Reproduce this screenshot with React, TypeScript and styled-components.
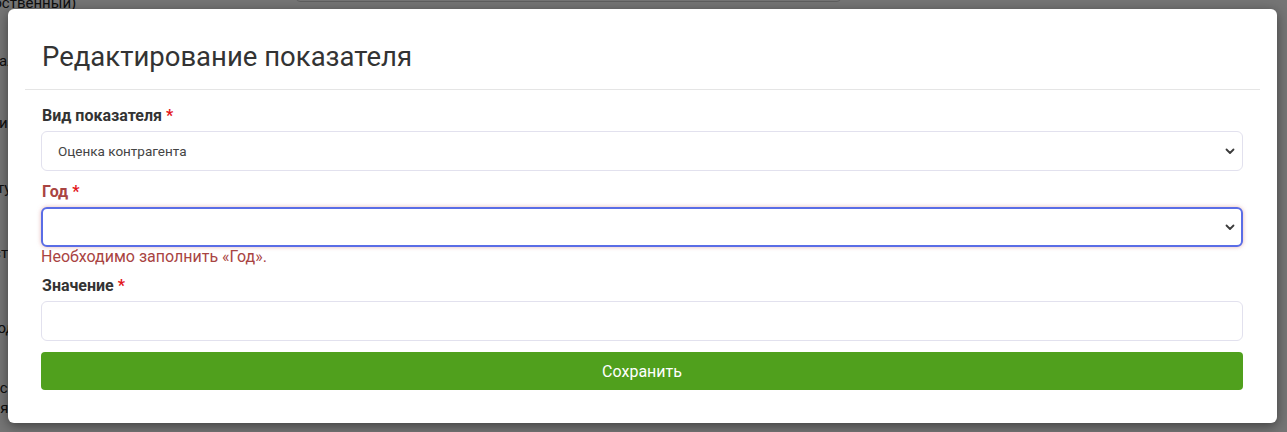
import styled, { createGlobalStyle } from 'styled-components';

const colors = {
  text: '#333333',
  muted: '#444444',
  border: '#e2e1ee',
  divider: '#e5e5e5',
  error: '#a94442',
  required: '#e3161b',
  focus: '#5a6de6',
  success: '#50a01d',
};

const GlobalStyle = createGlobalStyle`
  html, body {
    margin: 0;
    padding: 0;
    height: 100%;
    overflow: hidden;
    background: #ffffff;
    font-family: Roboto, "Liberation Sans", Arial, sans-serif;
  }
  * { box-sizing: border-box; }
`;

const Page = styled.div`
  height: 432px;
  overflow: hidden;
  position: relative;
`;

const BackdropText = styled.div`
  display: flex;
  flex-direction: column;
  font-size: 15px;
  color: #222;
  margin-left: -28px;
`;

const BackLine = styled.div<{ $gap: number }>`
  margin-top: ${(p) => p.$gap}px;
  line-height: 20px;
  white-space: nowrap;
`;

const TopField = styled.div`
  position: absolute;
  left: 296px;
  top: -30px;
  width: 545px;
  height: 32px;
  border: 1px solid #cfcfcf;
  border-radius: 4px;
`;

const Overlay = styled.div`
  position: absolute;
  inset: 0;
  background: rgba(0, 0, 0, 0.54);
  padding: 9px 10px 0 8px;
`;

const Modal = styled.div`
  background: #ffffff;
  border-radius: 6px;
  box-shadow: 0 3px 12px rgba(0, 0, 0, 0.45);
  height: 414px;
`;

const Header = styled.div`
  margin: 0 17px;
  padding: 33px 17px 17px;
  border-bottom: 1px solid ${colors.divider};
`;

const Title = styled.h4`
  margin: 0;
  font-size: 27.5px;
  line-height: 30px;
  font-weight: 400;
  color: ${colors.text};
`;

const Body = styled.div`
  padding: 16px 34px 0 33px;
`;

const Group = styled.div<{ $gap: number }>`
  display: flex;
  flex-direction: column;
  margin-bottom: ${(p) => p.$gap}px;
`;

const Label = styled.label<{ $invalid?: boolean }>`
  font-size: 16px;
  line-height: 20px;
  font-weight: 700;
  padding-left: 1px;
  margin-bottom: 5px;
  color: ${(p) => (p.$invalid ? colors.error : colors.text)};
`;

const Star = styled.span`
  color: ${colors.required};
`;

const SelectWrap = styled.div`
  position: relative;
`;

const Select = styled.select<{ $focused?: boolean }>`
  appearance: none;
  width: 100%;
  height: 40px;
  padding: 0 16px;
  font-family: inherit;
  font-size: 13.5px;
  color: ${colors.muted};
  background: #ffffff;
  border: ${(p) => (p.$focused ? `2px solid ${colors.focus}` : `1px solid ${colors.border}`)};
  border-radius: 6px;
  box-shadow: ${(p) => (p.$focused ? '0 0 4px rgba(205, 120, 120, 0.55)' : 'none')};
  outline: none;
`;

const Chevron = styled.svg`
  position: absolute;
  right: 8px;
  top: 16px;
  width: 10px;
  height: 8px;
  pointer-events: none;
`;

const Input = styled.input`
  width: 100%;
  height: 40px;
  padding: 0 16px;
  font-family: inherit;
  font-size: 13.5px;
  border: 1px solid ${colors.border};
  border-radius: 6px;
  outline: none;
`;

const ErrorText = styled.div`
  font-size: 16px;
  line-height: 20px;
  color: ${colors.error};
`;

const SubmitButton = styled.button`
  width: 100%;
  height: 38px;
  border: none;
  border-radius: 4px;
  background: ${colors.success};
  color: #ffffff;
  font-family: inherit;
  font-size: 16px;
  cursor: pointer;
`;

function ChevronIcon() {
  return (
    <Chevron viewBox="0 0 10 8">
      <path d="M1.5 2.5 L5 6 L8.5 2.5" fill="none" stroke="#3b3b3b" strokeWidth="1.8" strokeLinecap="round" strokeLinejoin="round" />
    </Chevron>
  );
}

export default function App() {
  return (
    <>
      <GlobalStyle />
      <Page>
        <TopField />
        <BackdropText>
          <BackLine $gap={-7}>(собственный)</BackLine>
          <BackLine $gap={38}>Начало</BackLine>
          <BackLine $gap={42}>Период</BackLine>
          <BackLine $gap={45}>Статус</BackLine>
          <BackLine $gap={45}>Место</BackLine>
          <BackLine $gap={55}>Погода</BackLine>
          <BackLine $gap={40}>Прос</BackLine>
          <BackLine $gap={0}>Фрая</BackLine>
        </BackdropText>
        <Overlay>
          <Modal>
            <Header>
              <Title>Редактирование показателя</Title>
            </Header>
            <Body>
              <Group $gap={11}>
                <Label>
                  Вид показателя <Star>*</Star>
                </Label>
                <SelectWrap>
                  <Select defaultValue="rating">
                    <option value="rating">Оценка контрагента</option>
                  </Select>
                  <ChevronIcon />
                </SelectWrap>
              </Group>
              <Group $gap={9}>
                <Label $invalid>
                  Год <Star>*</Star>
                </Label>
                <SelectWrap>
                  <Select $focused defaultValue="">
                    <option value=""></option>
                  </Select>
                  <ChevronIcon />
                </SelectWrap>
                <ErrorText>Необходимо заполнить «Год».</ErrorText>
              </Group>
              <Group $gap={11}>
                <Label>
                  Значение <Star>*</Star>
                </Label>
                <Input type="text" />
              </Group>
              <SubmitButton type="button">Сохранить</SubmitButton>
            </Body>
          </Modal>
        </Overlay>
      </Page>
    </>
  );
}
